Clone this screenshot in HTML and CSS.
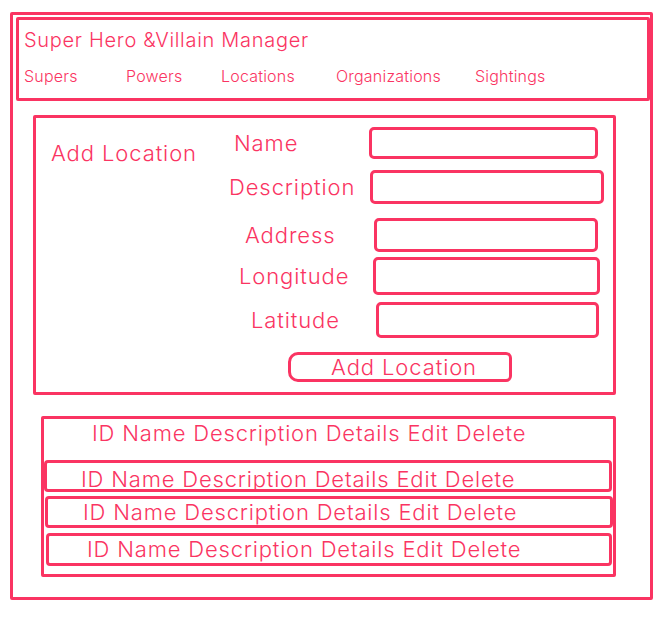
FILE: index.html
```html
<!DOCTYPE html>
<html>
<head>
<meta charset="utf-8">
<link rel="stylesheet" href="styles.css">
</head>
<body>
<div class="frame">
  <div class="header">
    <div class="title">Super Hero &amp;Villain Manager</div>
    <nav class="nav">
      <span>Supers</span>
      <span>Powers</span>
      <span>Locations</span>
      <span>Organizations</span>
      <span>Sightings</span>
    </nav>
  </div>

  <div class="form-box">
    <div class="form-title">Add Location</div>
    <div class="fields">
      <div class="row r1"><span class="label">Name</span><div class="input"></div></div>
      <div class="row r2"><span class="label">Description</span><div class="input"></div></div>
      <div class="row r3"><span class="label">Address</span><div class="input"></div></div>
      <div class="row r4"><span class="label">Longitude</span><div class="input"></div></div>
      <div class="row r5"><span class="label">Latitude</span><div class="input"></div></div>
      <div class="button">Add Location</div>
    </div>
  </div>

  <div class="list-box">
    <div class="list-head">ID Name Description Details Edit Delete</div>
    <div class="item i1">ID Name Description Details Edit Delete</div>
    <div class="item i2">ID Name Description Details Edit Delete</div>
    <div class="item i3">ID Name Description Details Edit Delete</div>
  </div>
</div>
</body>
</html>
```

FILE: styles.css
```css
* { box-sizing: border-box; }

body {
  margin: 0;
  background: #ffffff;
  color: #fa3462;
  font-family: Inter, "Noto Sans", sans-serif;
  font-weight: 300;
}

.frame {
  margin: 12px 0 0 10px;
  width: 643px;
  height: 588px;
  border: 3px solid #fa3462;
  border-radius: 2px;
}

.header {
  margin: 2px 0 0 3px;
  width: 634px;
  height: 84px;
  border: 3px solid #fa3462;
  border-radius: 2px;
  padding: 8px 0 0 5px;
}

.title {
  font-size: 20px;
  line-height: 24px;
  letter-spacing: 0.7px;
}

.nav {
  margin-top: 14px;
  display: grid;
  grid-template-columns: 102px 95px 115px 139px auto;
  font-size: 16px;
  line-height: 20px;
  letter-spacing: 0.2px;
}

.form-box {
  margin: 14px 0 0 20px;
  width: 583px;
  height: 280px;
  border: 3px solid #fa3462;
  border-radius: 2px;
  display: flex;
}

.form-title {
  width: 190px;
  flex: none;
  padding: 22px 0 0 15px;
  font-size: 22px;
  line-height: 26px;
  letter-spacing: 0.9px;
}

.fields {
  flex: 1;
  display: flex;
  flex-direction: column;
}

.row {
  display: flex;
  align-items: center;
  font-size: 22px;
  line-height: 26px;
  letter-spacing: 0.9px;
}

.label {
  flex: none;
}

.input {
  flex: none;
  border: 3px solid #fa3462;
  border-radius: 5px;
}

.r1 { margin-top: 9px; }
.r1 .label { width: 143px; padding-left: 8px; }
.r1 .input { width: 229px; height: 32px; }

.r2 { margin-top: 11px; }
.r2 .label { width: 144px; padding-left: 3px; }
.r2 .input { width: 234px; height: 34px; }

.r3 { margin-top: 14px; }
.r3 .label { width: 148px; padding-left: 19px; }
.r3 .input { width: 224px; height: 34px; }

.r4 { margin-top: 5px; }
.r4 .label { width: 147px; padding-left: 13px; }
.r4 .input { width: 227px; height: 38px; }

.r5 { margin-top: 7px; }
.r5 .label { width: 150px; padding-left: 25px; }
.r5 .input { width: 223px; height: 36px; }

.button {
  margin: 14px 0 0 62px;
  width: 224px;
  height: 30px;
  border: 3px solid #fa3462;
  border-radius: 10px 6px 6px 10px;
  padding-left: 8px;
  font-size: 22px;
  line-height: 24px;
  letter-spacing: 0.9px;
  text-align: center;
}

.list-box {
  margin: 21px 0 0 28px;
  width: 575px;
  height: 161px;
  border: 3px solid #fa3462;
  border-radius: 2px;
}

.list-head {
  margin: 1px 0 0 48px;
  font-size: 22px;
  line-height: 26px;
  letter-spacing: 0.82px;
}

.item {
  border: 3px solid #fa3462;
  border-radius: 4px;
  font-size: 22px;
  line-height: 26px;
  letter-spacing: 0.82px;
}

.i1 { margin: 14px 0 0 0; width: 568px; height: 32px; padding: 3px 0 0 34px; }
.i2 { margin: 4px 0 0 1px; width: 568px; height: 32px; padding: 0 0 0 35px; }
.i3 { margin: 5px 0 0 2px; width: 566px; height: 33px; padding: 0 0 0 38px; }
```
